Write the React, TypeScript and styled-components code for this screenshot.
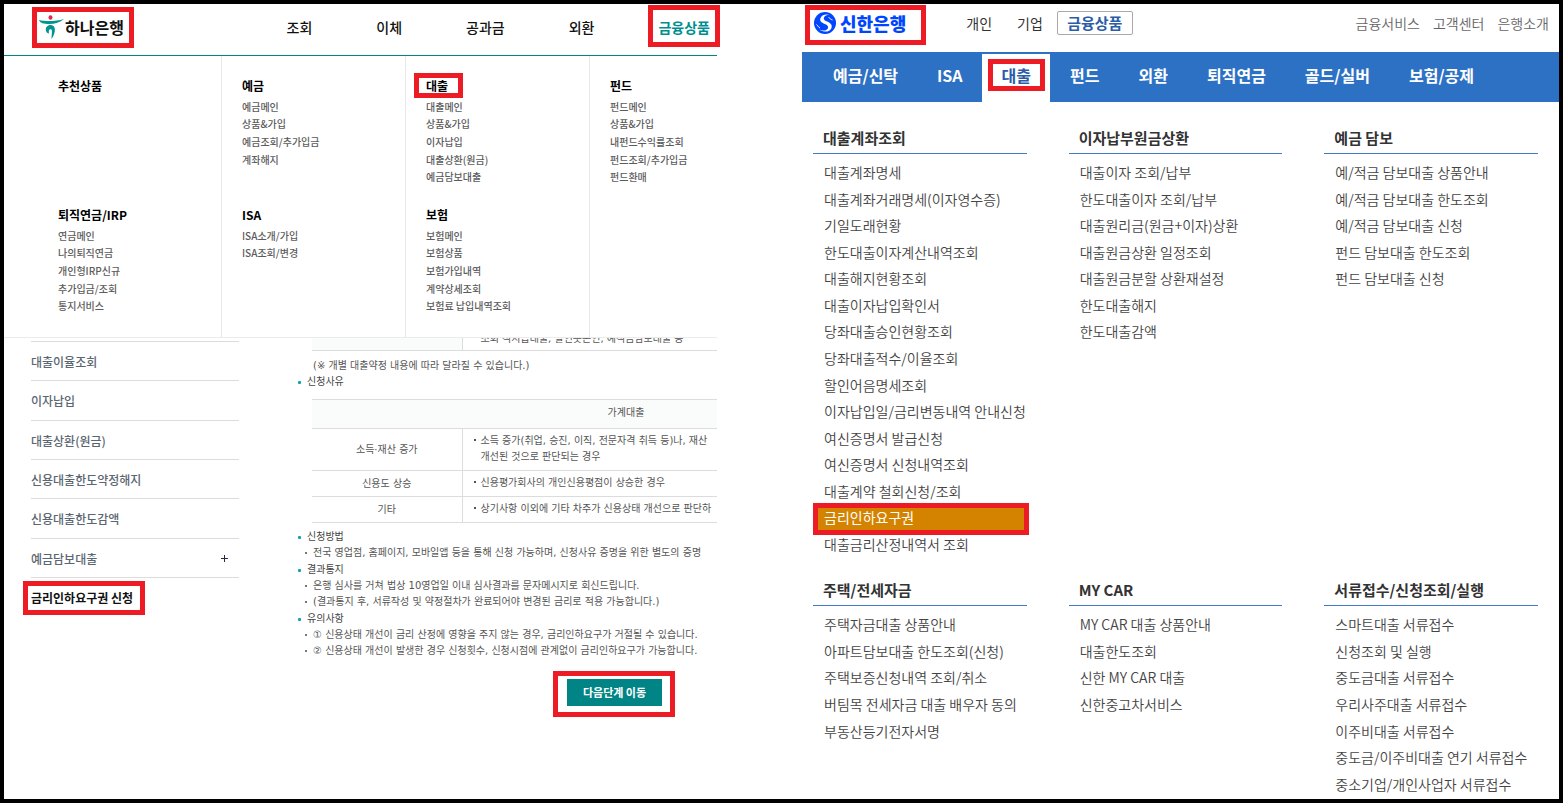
import React from "react";
import styled, { createGlobalStyle, css } from "styled-components";

const GlobalStyle = createGlobalStyle`
  *, *::before, *::after { box-sizing: border-box; }
  body { margin: 0; background: #fff; }
  body, button { font-family: "Noto Sans CJK KR", "Noto Sans", sans-serif; }
  ul, h1, h2, h3, p { margin: 0; padding: 0; }
  ul { list-style: none; }
  a { color: inherit; text-decoration: none; }
`;

const Frame = styled.div`
  min-height: 100vh;
  border: 4px solid #000;
  display: grid;
  grid-template-columns: minmax(0, 713fr) minmax(0, 757fr);
  column-gap: 85px;
`;

/* Red call-out drawn round its content; $inset is the distance it reaches outwards. */
const Mark = styled.span<{ $inset: string }>`
  position: relative;
  display: inline-flex;
  align-items: center;
  &::after {
    content: "";
    position: absolute;
    inset: ${(p) => p.$inset};
    border: 5px solid #ed1c24;
    pointer-events: none;
  }
`;

/* ---------- Hana ---------- */

const HanaPanel = styled.section`
  min-width: 0;
`;

const HanaHeader = styled.header`
  height: 52px;
  padding: 0 7px 6px 34px;
  border-bottom: 1px solid #008485;
  display: flex;
  align-items: center;
  justify-content: space-between;
`;

const HanaLogo = styled.a`
  display: flex;
  align-items: center;
  gap: 1px;
  color: #111;
  font-size: 16px;
  line-height: 24px;
  font-weight: 700;
  white-space: nowrap;
`;

const HanaNav = styled.nav`
  display: flex;
  gap: 64px;
  white-space: nowrap;
`;

const HanaNavLink = styled.a<{ $active?: boolean }>`
  font-size: 14px;
  line-height: 20px;
  font-weight: ${(p) => (p.$active ? 700 : 500)};
  color: ${(p) => (p.$active ? "#008f90" : "#111")};
`;

const MegaMenu = styled.div`
  display: grid;
  grid-template-columns: 217fr 184fr 184fr 128fr;
  border-bottom: 1px solid #ebebeb;
`;

const MegaColumn = styled.div<{ $first?: boolean }>`
  min-width: 0;
  padding: 20px 0 22px ${(p) => (p.$first ? 54 : 20)}px;
  border-left: ${(p) => (p.$first ? 0 : 1)}px solid #e9e9e9;
  display: grid;
  align-content: start;
  row-gap: 19px;
  white-space: nowrap;
`;

const MegaTitle = styled.h3`
  font-size: 12px;
  line-height: 20px;
  font-weight: 700;
  color: #000;
`;

const MegaList = styled.ul`
  height: 88px;
  margin-top: 2px;
  display: grid;
  grid-template-rows: repeat(5, 1fr);
  align-items: center;
  font-size: 10px;
  line-height: 16px;
  font-weight: 500;
  color: #5c5c5c;
`;

const HanaBody = styled.div`
  display: grid;
  grid-template-columns: 208px minmax(0, 1fr);
  column-gap: 56px;
  padding-left: 27px;
`;

const SideMenu = styled.nav`
  padding-top: 3px;
  font-size: 12px;
  line-height: 18px;
  font-weight: 500;
  color: #5b6670;
  white-space: nowrap;
`;

const SideList = styled.ul`
  height: 237px;
  border-bottom: 1px solid #dcdcdc;
  display: grid;
  grid-template-rows: repeat(6, 1fr);
`;

const SideItem = styled.li`
  border-top: 1px solid #dcdcdc;
  padding: 2px 10px 0 0;
  display: flex;
  align-items: center;
  justify-content: space-between;
`;

const SideCurrent = styled.a`
  display: block;
  padding-top: 11px;
  font-weight: 700;
  color: #111;
`;

const Article = styled.article`
  min-width: 0;
  padding-left: 3px;
  overflow-x: clip;
  font-family: "DejaVu Sans", "Noto Sans CJK KR", sans-serif;
  font-size: 10px;
  line-height: 16px;
  color: #555;
  white-space: nowrap;
`;

const Table = styled.table`
  width: 628px;
  margin-left: 14px;
  table-layout: fixed;
  border-collapse: collapse;
  th, td { border-bottom: 1px solid #dcdcdc; font-weight: 400; }
  td { padding: 4px 10px 5px 18px; border-left: 1px solid #dcdcdc; }
`;

const ReasonTable = styled(Table)`
  margin-top: 9px;
  border-top: 1px solid #dcdcdc;
  thead th { height: 29px; padding: 0 0 2px; background: #fafbfb; }
`;

const LabelCol = styled.col`
  width: 150px;
`;

/* Only the last line of this table shows below the open menu. */
const Peek = styled.div`
  height: 13px;
  display: flex;
  align-items: flex-end;
  overflow: hidden;
  th { background: #fafbfb; }
  td { padding-bottom: 3px; }
`;

const bullet = css`
  &::before {
    content: "";
    flex: none;
    background: currentColor;
  }
`;

const TableNote = styled.p`
  position: relative;
  &::before {
    content: "";
    position: absolute;
    left: -7px;
    top: 6px;
    width: 2px;
    height: 2px;
    background: #555;
  }
`;

const Note = styled.p`
  margin: 7px 0 0 15px;
`;

const Topic = styled.h3`
  display: flex;
  align-items: center;
  gap: 6px;
  font-size: 10px;
  font-weight: 400;
  color: #444;
  ${bullet}
  &::before { width: 3px; height: 3px; border-radius: 1px; background: #14a0ae; }
`;

const TopicLine = styled.li`
  display: flex;
  align-items: center;
  gap: 6px;
  padding-left: 7px;
  ${bullet}
  &::before { width: 2px; height: 2px; background: #777; }
`;

const Topics = styled.div`
  margin-top: 6px;
  display: grid;
  row-gap: 1px;
`;

const Actions = styled.div`
  margin-top: 20px;
  padding-left: 269px;
`;

const NextButton = styled.button`
  width: 95px;
  height: 27px;
  padding: 0 0 2px;
  border: 0;
  background: #008485;
  color: #fff;
  font-size: 11px;
  font-weight: 700;
`;

/* ---------- Shinhan ---------- */

const ShinhanPanel = styled.section`
  min-width: 0;
`;

const ShinhanHeader = styled.header`
  height: 48px;
  padding: 0 10px 11px 12px;
  display: flex;
  align-items: center;
  white-space: nowrap;
  color: #333;
`;

const ShinhanLogo = styled.a`
  display: flex;
  align-items: center;
  gap: 4px;
  font-size: 18px;
  line-height: 24px;
  font-weight: 900;
  color: #0046ff;
`;

const Segments = styled.nav`
  margin-left: 60px;
  display: flex;
  align-items: center;
  gap: 25px;
  font-size: 14px;
  line-height: 20px;
`;

const SegmentButton = styled.button`
  width: 76px;
  height: 24px;
  margin-left: 14px;
  padding: 0;
  border: 1px solid #a9a9a9;
  border-radius: 2px;
  background: #fff;
  color: #2a5ca8;
  font-size: 15px;
  line-height: 20px;
  font-weight: 700;
`;

const Utility = styled.nav`
  margin-left: auto;
  display: flex;
  gap: 13px;
  font-size: 14px;
  line-height: 20px;
  font-weight: 350;
  color: #666;
`;

const BlueBar = styled.nav`
  height: 50px;
  padding: 2px 0 0 11px;
  background: #2d71c4;
  display: flex;
  white-space: nowrap;
`;

const BlueTab = styled.a<{ $active?: boolean }>`
  padding: 0 19px 6px 20px;
  display: flex;
  align-items: center;
  font-size: 16px;
  line-height: 24px;
  font-weight: 700;
  color: ${(p) => (p.$active ? "#2a5ca8" : "#fff")};
  background: ${(p) => (p.$active ? "#fff" : "transparent")};
`;

const LinkGrid = styled.div`
  padding: 24px 21px 1px 11px;
  display: grid;
  grid-template-columns: repeat(3, minmax(0, 1fr));
  column-gap: 42px;
  row-gap: 21px;
`;

const GroupTitle = styled.h2`
  padding: 0 10px 4px;
  border-bottom: 1px solid #4477c8;
  font-size: 15px;
  line-height: 23px;
  font-weight: 700;
  color: #333;
  white-space: nowrap;
`;

const GroupList = styled.ul<{ $rows: number; $height: number }>`
  height: ${(p) => p.$height}px;
  margin-top: 5px;
  display: grid;
  grid-template-rows: repeat(${(p) => p.$rows}, 1fr);
  font-size: 14px;
  line-height: 20px;
  font-weight: 350;
  color: #444;
  white-space: nowrap;
`;

const GroupItem = styled.li<{ $current?: boolean }>`
  padding-left: 11px;
  display: flex;
  align-items: center;
  ${(p) =>
    p.$current &&
    css`
      background: #d48300;
      color: #fff;
      font-weight: 400;
      position: relative;
      &::after {
        content: "";
        position: absolute;
        inset: -1px -2px -5px 0;
        border: 5px solid #ed1c24;
        background: linear-gradient(#d48300, #d48300) bottom / 100% 4px no-repeat;
      }
    `}
`;

type Group = { title: string; items: string[] };

const megaColumns: Group[][] = [
  [
    { title: "추천상품", items: [] },
    { title: "퇴직연금/IRP", items: ["연금메인", "나의퇴직연금", "개인형IRP신규", "추가입금/조회", "통지서비스"] },
  ],
  [
    { title: "예금", items: ["예금메인", "상품&가입", "예금조회/추가입금", "계좌해지"] },
    { title: "ISA", items: ["ISA소개/가입", "ISA조회/변경"] },
  ],
  [
    { title: "대출", items: ["대출메인", "상품&가입", "이자납입", "대출상환(원금)", "예금담보대출"] },
    { title: "보험", items: ["보험메인", "보험상품", "보험가입내역", "계약상세조회", "보험료 납입내역조회"] },
  ],
  [{ title: "펀드", items: ["펀드메인", "상품&가입", "내펀드수익률조회", "펀드조회/추가입금", "펀드환매"] }],
];

const sideItems = ["대출이율조회", "이자납입", "대출상환(원금)", "신용대출한도약정해지", "신용대출한도감액", "예금담보대출"];

const topics: Group[] = [
  { title: "신청방법", items: ["전국 영업점, 홈페이지, 모바일앱 등을 통해 신청 가능하며, 신청사유 증명을 위한 별도의 증명"] },
  {
    title: "결과통지",
    items: [
      "은행 심사를 거쳐 법상 10영업일 이내 심사결과를 문자메시지로 회신드립니다.",
      "(결과통지 후, 서류작성 및 약정절차가 완료되어야 변경된 금리로 적용 가능합니다.)",
    ],
  },
  {
    title: "유의사항",
    items: [
      "① 신용상태 개선이 금리 산정에 영향을 주지 않는 경우, 금리인하요구가 거절될 수 있습니다.",
      "② 신용상태 개선이 발생한 경우 신청횟수, 신청시점에 관계없이 금리인하요구가 가능합니다.",
    ],
  },
];

const blueTabs = ["예금/신탁", "ISA", "대출", "펀드", "외환", "퇴직연금", "골드/실버", "보험/공제"];

const CURRENT = "금리인하요구권";

const upperGroups: Group[] = [
  {
    title: "대출계좌조회",
    items: [
      "대출계좌명세", "대출계좌거래명세(이자영수증)", "기일도래현황", "한도대출이자계산내역조회", "대출해지현황조회",
      "대출이자납입확인서", "당좌대출승인현황조회", "당좌대출적수/이율조회", "할인어음명세조회",
      "이자납입일/금리변동내역 안내신청", "여신증명서 발급신청", "여신증명서 신청내역조회", "대출계약 철회신청/조회",
      CURRENT, "대출금리산정내역서 조회",
    ],
  },
  {
    title: "이자납부원금상환",
    items: [
      "대출이자 조회/납부", "한도대출이자 조회/납부", "대출원리금(원금+이자)상환", "대출원금상환 일정조회",
      "대출원금분할 상환재설정", "한도대출해지", "한도대출감액",
    ],
  },
  {
    title: "예금 담보",
    items: [
      "예/적금 담보대출 상품안내", "예/적금 담보대출 한도조회", "예/적금 담보대출 신청", "펀드 담보대출 한도조회",
      "펀드 담보대출 신청",
    ],
  },
];

const lowerGroups: Group[] = [
  {
    title: "주택/전세자금",
    items: [
      "주택자금대출 상품안내", "아파트담보대출 한도조회(신청)", "주택보증신청내역 조회/취소",
      "버팀목 전세자금 대출 배우자 동의", "부동산등기전자서명",
    ],
  },
  { title: "MY CAR", items: ["MY CAR 대출 상품안내", "대출한도조회", "신한 MY CAR 대출", "신한중고차서비스"] },
  {
    title: "서류접수/신청조회/실행",
    items: [
      "스마트대출 서류접수", "신청조회 및 실행", "중도금대출 서류접수", "우리사주대출 서류접수", "이주비대출 서류접수",
      "중도금/이주비대출 연기 서류접수", "중소기업/개인사업자 서류접수",
    ],
  },
];

const HanaSymbol = () => (
  <svg width="26" height="24" viewBox="0 0 26 24" aria-hidden="true">
    <ellipse cx="12.500" cy="2.500" rx="2" ry="2.200" fill="#e4254f" />
    <path d="M1 5C7 6.500 18 6.500 26 4C22 7.500 17 9 11.500 9C5.500 9 2 8 1 5Z" fill="#00958f" />
    <path d="M8 16C7 12.500 9.500 9.800 13 10C17.800 10.300 18.500 17 13.500 24C13.500 19.500 15 14.500 12.700 14.200C11 14 10.500 15.500 11 18.500C9.500 18.300 8.500 17.500 8 16Z" fill="#00958f" />
  </svg>
);

const ShinhanSymbol = () => (
  <svg width="22" height="22" viewBox="0 0 22 22" aria-hidden="true">
    <circle cx="11" cy="11" r="11" fill="#0046ff" />
    <path
      d="M16.500 3.500C13 1.800 8 2.500 6.500 6C5 10 9 11 12 12.500C15.500 14.300 14.500 18 10.500 18.500C8.500 18.700 7 18.300 5.500 17.500C9 20.500 16 20.500 17.500 16C18.800 11.800 15 10.300 12 9C8.500 7.500 9.500 3.800 13 3.200C14.500 3 15.500 3.200 16.500 3.500Z"
      fill="#fff"
    />
    <path d="M2.500 12.500C4 13.500 4 15 6 16M14.500 5.500C16 6 16.500 7.500 18.500 8" fill="none" stroke="#fff" strokeWidth="1" />
  </svg>
);

const PlusIcon = () => (
  <svg width="9" height="9" viewBox="0 0 9 9" aria-hidden="true">
    <path d="M4.500 1V8M1 4.500H8" stroke="#222b40" strokeWidth="1" />
  </svg>
);

const LinkGroup = ({ group, rows, height }: { group: Group; rows: number; height: number }) => (
  <div>
    <GroupTitle>{group.title}</GroupTitle>
    <GroupList $rows={rows} $height={height}>
      {group.items.map((item) => (
        <GroupItem key={item} $current={item === CURRENT}>
          <a href="#">{item}</a>
        </GroupItem>
      ))}
    </GroupList>
  </div>
);

const Hana = () => (
  <HanaPanel>
    <HanaHeader>
      <Mark $inset="-8px -10px -9px -6px">
        <HanaLogo href="#"><HanaSymbol />하나은행</HanaLogo>
      </Mark>
      <HanaNav>
        {["조회", "이체", "공과금", "외환"].map((t) => <HanaNavLink key={t} href="#">{t}</HanaNavLink>)}
        <Mark $inset="-12px -10px -10px">
          <HanaNavLink href="#" $active>금융상품</HanaNavLink>
        </Mark>
      </HanaNav>
    </HanaHeader>
    <MegaMenu>
      {megaColumns.map((column, i) => (
        <MegaColumn key={i} $first={i === 0}>
          {column.map((g) => (
            <div key={g.title}>
              <MegaTitle>
                {g.title === "대출" ? <Mark $inset="-3px -15px -2px -12px">{g.title}</Mark> : g.title}
              </MegaTitle>
              <MegaList>
                {g.items.map((item) => <li key={item}><a href="#">{item}</a></li>)}
              </MegaList>
            </div>
          ))}
        </MegaColumn>
      ))}
    </MegaMenu>
    <HanaBody>
      <SideMenu>
        <SideList>
          {sideItems.map((item, i) => (
            <SideItem key={item}>
              <a href="#">{item}</a>
              {i === sideItems.length - 1 && <PlusIcon />}
            </SideItem>
          ))}
        </SideList>
        <SideCurrent href="#">
          <Mark $inset="-8px -12px -8px -8px">금리인하요구권 신청</Mark>
        </SideCurrent>
      </SideMenu>
      <Article>
        <Peek>
          <Table>
            <colgroup><LabelCol /><col /></colgroup>
            <tbody>
              <tr><th /><td>조회 적지급대출, 할인옷본인, 예적금담보대출 등</td></tr>
            </tbody>
          </Table>
        </Peek>
        <Note>(※ 개별 대출약정 내용에 따라 달라질 수 있습니다.)</Note>
        <Topic>신청사유</Topic>
        <ReasonTable>
          <colgroup><LabelCol /><col /></colgroup>
          <thead><tr><th colSpan={2}>가계대출</th></tr></thead>
          <tbody>
            <tr>
              <th>소득·재산 증가</th>
              <td><TableNote>소득 증가(취업, 승진, 이직, 전문자격 취득 등)나, 재산<br />개선된 것으로 판단되는 경우</TableNote></td>
            </tr>
            <tr>
              <th>신용도 상승</th>
              <td><TableNote>신용평가회사의 개인신용평점이 상승한 경우</TableNote></td>
            </tr>
            <tr>
              <th>기타</th>
              <td><TableNote>상기사항 이외에 기타 차주가 신용상태 개선으로 판단하</TableNote></td>
            </tr>
          </tbody>
        </ReasonTable>
        <Topics>
          {topics.map((t) => (
            <div key={t.title}>
              <Topic>{t.title}</Topic>
              <ul>{t.items.map((item) => <TopicLine key={item}>{item}</TopicLine>)}</ul>
            </div>
          ))}
        </Topics>
        <Actions>
          <Mark $inset="-8px -13px -11px -14px">
            <NextButton type="button">다음단계 이동</NextButton>
          </Mark>
        </Actions>
      </Article>
    </HanaBody>
  </HanaPanel>
);

const Shinhan = () => (
  <ShinhanPanel>
    <ShinhanHeader>
      <Mark $inset="-6px -20px -10px -9px">
        <ShinhanLogo href="#"><ShinhanSymbol />신한은행</ShinhanLogo>
      </Mark>
      <Segments>
        <a href="#">개인</a>
        <a href="#">기업</a>
      </Segments>
      <SegmentButton type="button">금융상품</SegmentButton>
      <Utility>
        <a href="#">금융서비스</a>
        <a href="#">고객센터</a>
        <a href="#">은행소개</a>
      </Utility>
    </ShinhanHeader>
    <BlueBar>
      {blueTabs.map((t) => (
        <BlueTab key={t} href="#" $active={t === "대출"}>
          {t === "대출" ? <Mark $inset="-4px -14px">{t}</Mark> : t}
        </BlueTab>
      ))}
    </BlueBar>
    <LinkGrid>
      {upperGroups.map((g) => <LinkGroup key={g.title} group={g} rows={15} height={398} />)}
      {lowerGroups.map((g) => <LinkGroup key={g.title} group={g} rows={7} height={186} />)}
    </LinkGrid>
  </ShinhanPanel>
);

export default function App() {
  return (
    <>
      <GlobalStyle />
      <Frame>
        <Hana />
        <Shinhan />
      </Frame>
    </>
  );
}
